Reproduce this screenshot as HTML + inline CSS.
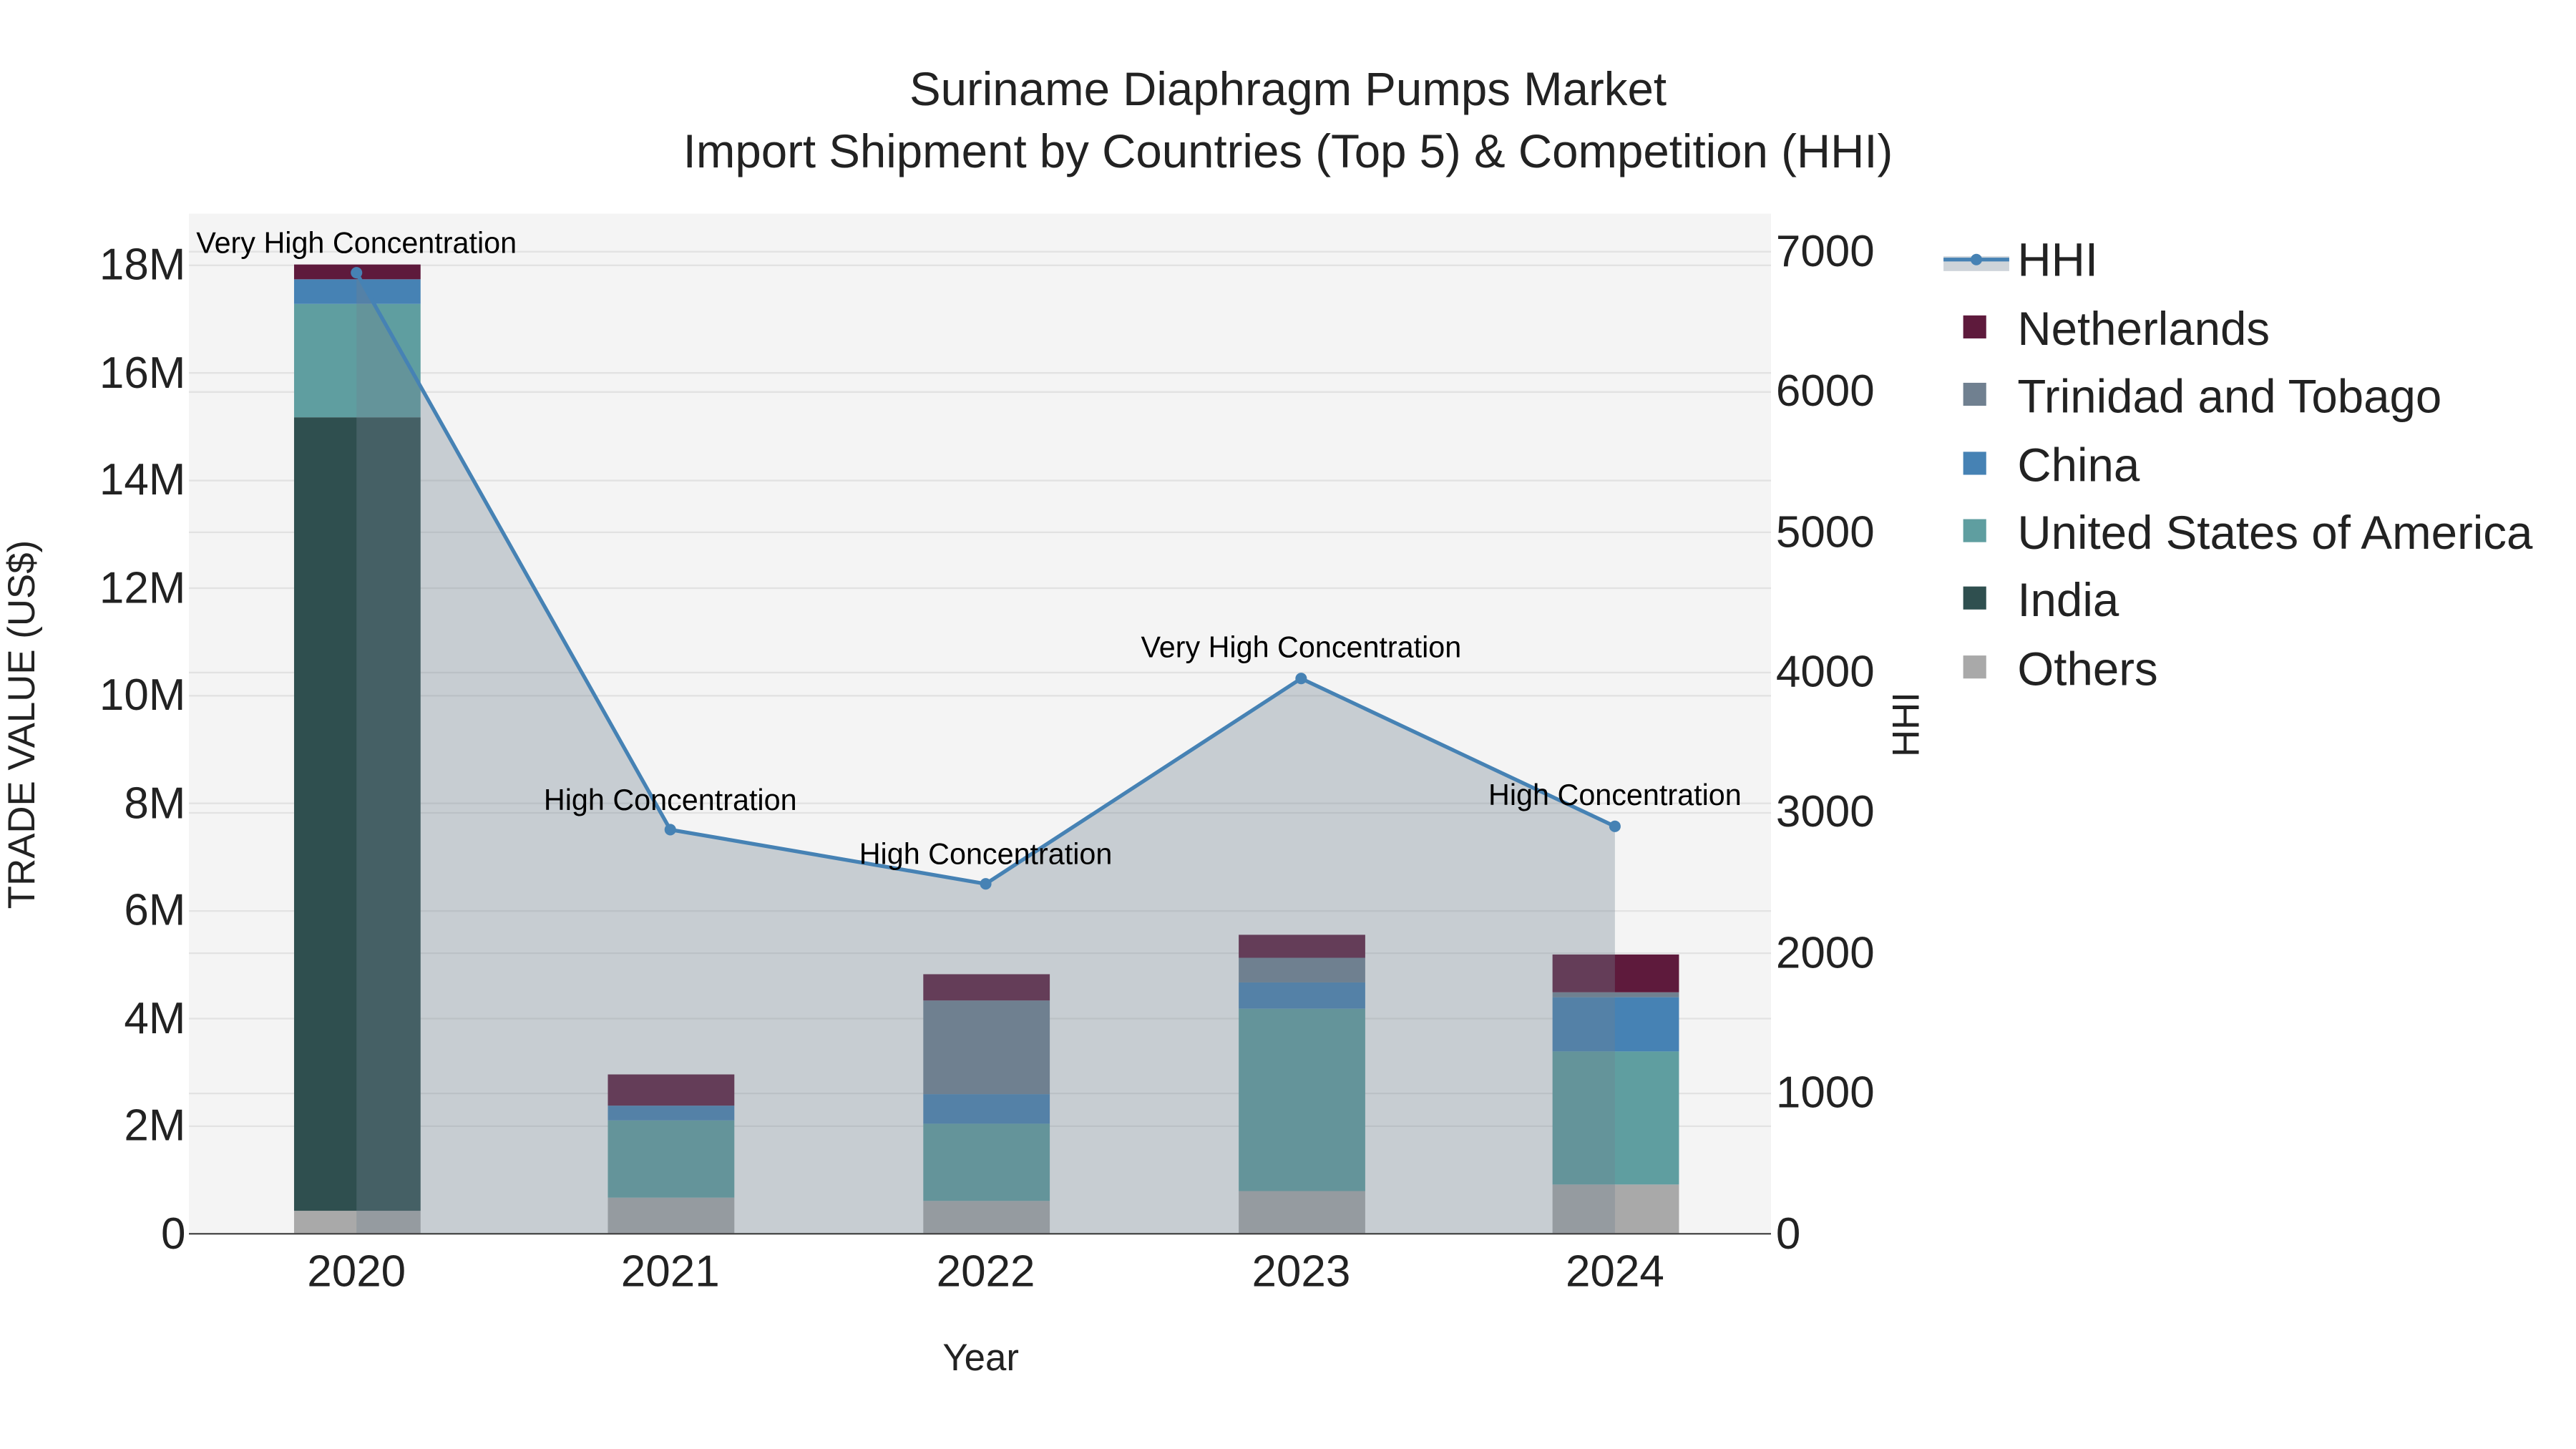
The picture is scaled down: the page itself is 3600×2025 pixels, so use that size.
<!DOCTYPE html>
<html><head><meta charset="utf-8"><style>html,body{margin:0;padding:0;background:#fff}svg{display:block}</style></head>
<body>
<svg width="3600" height="2025" viewBox="0 0 1568 882" preserveAspectRatio="none" xmlns="http://www.w3.org/2000/svg" font-family="Liberation Sans, sans-serif">
<rect x="0" y="0" width="1568" height="882" fill="#fff"/>
<rect x="115" y="130" width="963" height="621" fill="#f4f4f4"/>
<g stroke="#e2e2e2" stroke-width="1">
<line x1="115" x2="1078" y1="685.5" y2="685.5"/><line x1="115" x2="1078" y1="620" y2="620"/><line x1="115" x2="1078" y1="554.5" y2="554.5"/><line x1="115" x2="1078" y1="489" y2="489"/><line x1="115" x2="1078" y1="423.5" y2="423.5"/><line x1="115" x2="1078" y1="358" y2="358"/><line x1="115" x2="1078" y1="292.5" y2="292.5"/><line x1="115" x2="1078" y1="227" y2="227"/><line x1="115" x2="1078" y1="161.5" y2="161.5"/>
<line x1="115" x2="1078" y1="665.6" y2="665.6"/><line x1="115" x2="1078" y1="580.2" y2="580.2"/><line x1="115" x2="1078" y1="494.8" y2="494.8"/><line x1="115" x2="1078" y1="409.4" y2="409.4"/><line x1="115" x2="1078" y1="324" y2="324"/><line x1="115" x2="1078" y1="238.6" y2="238.6"/><line x1="115" x2="1078" y1="153.2" y2="153.2"/>
</g>
<g>
<rect x="179" y="737" width="77" height="14" fill="#a9a9a9"/>
<rect x="179" y="254" width="77" height="483" fill="#2f4f4f"/>
<rect x="179" y="185" width="77" height="69" fill="#5f9ea0"/>
<rect x="179" y="170" width="77" height="15" fill="#4682b4"/>
<rect x="179" y="161" width="77" height="9" fill="#5e1a3c"/>

<rect x="370" y="729" width="77" height="22" fill="#a9a9a9"/>
<rect x="370" y="682" width="77" height="47" fill="#5f9ea0"/>
<rect x="370" y="673" width="77" height="9" fill="#4682b4"/>
<rect x="370" y="654" width="77" height="19" fill="#5e1a3c"/>

<rect x="562" y="731" width="77" height="20" fill="#a9a9a9"/>
<rect x="562" y="684" width="77" height="47" fill="#5f9ea0"/>
<rect x="562" y="666" width="77" height="18" fill="#4682b4"/>
<rect x="562" y="609" width="77" height="57" fill="#708090"/>
<rect x="562" y="593" width="77" height="16" fill="#5e1a3c"/>

<rect x="754" y="725" width="77" height="26" fill="#a9a9a9"/>
<rect x="754" y="614" width="77" height="111" fill="#5f9ea0"/>
<rect x="754" y="598" width="77" height="16" fill="#4682b4"/>
<rect x="754" y="583" width="77" height="15" fill="#708090"/>
<rect x="754" y="569" width="77" height="14" fill="#5e1a3c"/>

<rect x="945" y="721" width="77" height="30" fill="#a9a9a9"/>
<rect x="945" y="640" width="77" height="81" fill="#5f9ea0"/>
<rect x="945" y="607" width="77" height="33" fill="#4682b4"/>
<rect x="945" y="604" width="77" height="3" fill="#708090"/>
<rect x="945" y="581" width="77" height="23" fill="#5e1a3c"/>
</g>
<polygon points="217,166 408,505 600,538 792,413 983,503 983,751 217,751" fill="rgba(112,128,144,0.34)"/>
<polyline points="217,166 408,505 600,538 792,413 983,503" fill="none" stroke="#4682b4" stroke-width="2.3"/>
<g fill="#4682b4"><circle cx="217" cy="166" r="3.5"/><circle cx="408" cy="505" r="3.5"/><circle cx="600" cy="538" r="3.5"/><circle cx="792" cy="413" r="3.5"/><circle cx="983" cy="503" r="3.5"/></g>
<line x1="115" x2="1078" y1="751" y2="751" stroke="#444" stroke-width="1"/>
<g font-size="18" fill="#000" text-anchor="middle">
<text x="217" y="154">Very High Concentration</text>
<text x="408" y="493">High Concentration</text>
<text x="600" y="526">High Concentration</text>
<text x="792" y="400">Very High Concentration</text>
<text x="983" y="490">High Concentration</text>
</g>
<g font-size="27" fill="#222" text-anchor="end">
<text x="113" y="760">0</text><text x="113" y="694">2M</text><text x="113" y="629">4M</text><text x="113" y="563">6M</text><text x="113" y="498">8M</text><text x="113" y="432">10M</text><text x="113" y="367">12M</text><text x="113" y="301">14M</text><text x="113" y="236">16M</text><text x="113" y="170">18M</text>
</g>
<g font-size="27" fill="#222" text-anchor="start">
<text x="1081" y="760">0</text><text x="1081" y="674">1000</text><text x="1081" y="589">2000</text><text x="1081" y="503">3000</text><text x="1081" y="418">4000</text><text x="1081" y="333">5000</text><text x="1081" y="247">6000</text><text x="1081" y="162">7000</text>
</g>
<g font-size="27" fill="#222" text-anchor="middle">
<text x="217" y="783">2020</text><text x="408" y="783">2021</text><text x="600" y="783">2022</text><text x="792" y="783">2023</text><text x="983" y="783">2024</text>
</g>
<text x="597" y="834" font-size="23" fill="#222" text-anchor="middle">Year</text>
<text transform="translate(21,441) rotate(-90)" font-size="23" fill="#222" text-anchor="middle">TRADE VALUE (US$)</text>
<text transform="translate(1168,441) rotate(-90)" font-size="23" fill="#222" text-anchor="middle">HHI</text>
<g font-size="28.5" fill="#222" text-anchor="middle">
<text x="784" y="64">Suriname Diaphragm Pumps Market</text>
<text x="784" y="102">Import Shipment by Countries (Top 5) &amp; Competition (HHI)</text>
</g>
<g font-size="28.5" fill="#222">
<rect x="1183" y="156" width="40" height="9" fill="rgba(112,128,144,0.34)"/>
<line x1="1183" x2="1223" y1="158" y2="158" stroke="#4682b4" stroke-width="2.3"/><circle cx="1203" cy="158" r="3.5" fill="#4682b4"/>
<text x="1228" y="168">HHI</text>
<rect x="1195" y="192" width="14" height="14" fill="#5e1a3c"/><text x="1228" y="210">Netherlands</text>
<rect x="1195" y="233" width="14" height="14" fill="#708090"/><text x="1228" y="251">Trinidad and Tobago</text>
<rect x="1195" y="275" width="14" height="14" fill="#4682b4"/><text x="1228" y="293">China</text>
<rect x="1195" y="316" width="14" height="14" fill="#5f9ea0"/><text x="1228" y="334">United States of America</text>
<rect x="1195" y="357" width="14" height="14" fill="#2f4f4f"/><text x="1228" y="375">India</text>
<rect x="1195" y="399" width="14" height="14" fill="#a9a9a9"/><text x="1228" y="417">Others</text>
</g>
</svg>
</body></html>
